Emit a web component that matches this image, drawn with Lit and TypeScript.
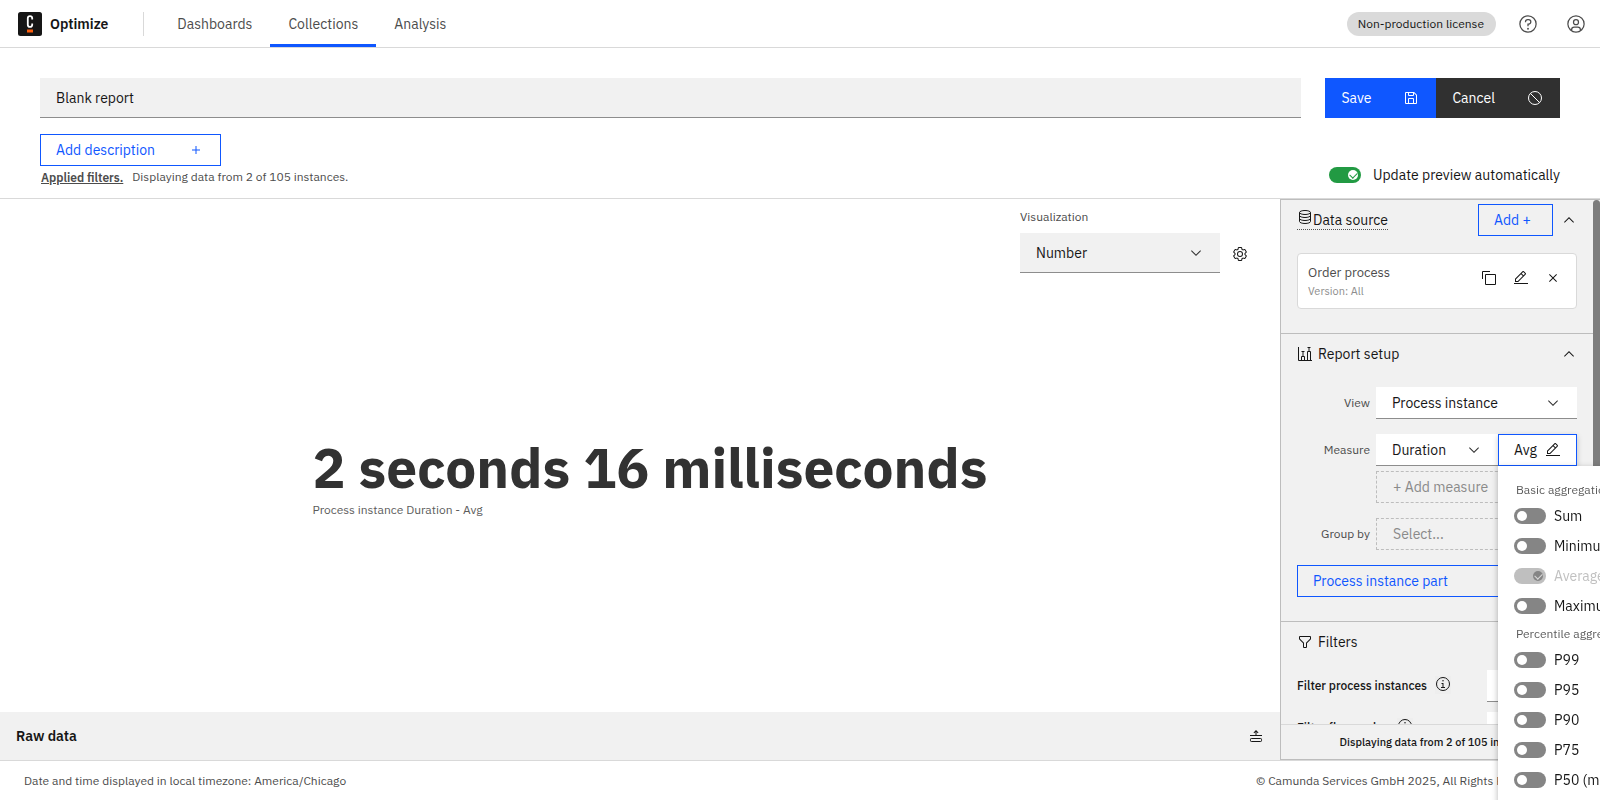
import { LitElement, html, css, svg } from 'lit';
import { customElement, property } from 'lit/decorators.js';

/* Icons are drawn on a 32-unit grid unless a box of 16 is given. */
const ICONS: Record<string, { box?: number; body: unknown }> = {
  help: {
    body: svg`<circle cx="16" cy="16" r="13" fill="none" stroke="currentColor" stroke-width="2"/>
      <circle cx="16" cy="23.5" r="1.5"/>
      <path d="M17 8h-1.5A4.49 4.49 0 0 0 11 12.5v.5h2v-.5A2.5 2.5 0 0 1 15.5 10H17a2.5 2.5 0 0 1 0 5h-2v4.5h2V17a4.5 4.5 0 0 0 0-9Z"/>`,
  },
  user: {
    body: svg`<path d="M16 8a5 5 0 1 0 5 5A5 5 0 0 0 16 8Zm0 8a3 3 0 1 1 3-3A3 3 0 0 1 16 16Z"/>
      <path d="M16 2A14 14 0 1 0 30 16 14 14 0 0 0 16 2ZM10 26.38V25a3 3 0 0 1 3-3h6a3 3 0 0 1 3 3v1.38a11.9 11.9 0 0 1-12 0Zm13.99-1.45A5 5 0 0 0 19 20H13a5 5 0 0 0-4.99 4.93 12 12 0 1 1 15.98 0Z"/>`,
  },
  save: {
    body: svg`<path d="M27.71,9.29l-5-5A1,1,0,0,0,22,4H6A2,2,0,0,0,4,6V26a2,2,0,0,0,2,2H26a2,2,0,0,0,2-2V10A1,1,0,0,0,27.71,9.29ZM12,6h8v4H12Zm8,20H12V18h8Zm2,0V18a2,2,0,0,0-2-2H12a2,2,0,0,0-2,2v8H6V6h4v4a2,2,0,0,0,2,2h8a2,2,0,0,0,2-2V6.41l4,4V26Z"/>`,
  },
  cancel: {
    body: svg`<g fill="none" stroke="currentColor" stroke-width="2"><circle cx="16" cy="16" r="13"/><path d="M6.8 6.8 25.2 25.2"/></g>`,
  },
  add: { body: svg`<path d="M17 15V8H15V15H8V17H15V24H17V17H24V15Z"/>` },
  copy: {
    body: svg`<path d="M28,10V28H10V10H28m0-2H10a2,2,0,0,0-2,2V28a2,2,0,0,0,2,2H28a2,2,0,0,0,2-2V10a2,2,0,0,0-2-2Z"/><path d="M4,18H2V4A2,2,0,0,1,4,2H18V4H4Z"/>`,
  },
  edit: {
    body: svg`<path d="M2 26H30V28H2z"/><path d="M25.4,9c0.8-0.8,0.8-2,0-2.8l-3.6-3.6c-0.8-0.8-2-0.8-2.8,0l-15,15V24h6.4L25.4,9z M20.4,4L24,7.6l-3,3L17.4,7L20.4,4z M6,22v-3.6l10-10l3.6,3.6l-10,10H6z"/>`,
  },
  close: {
    body: svg`<path d="M17.41 16L24 9.41 22.59 8 16 14.59 9.41 8 8 9.41 14.59 16 8 22.59 9.41 24 16 17.41 22.59 24 24 22.59 17.41 16z"/>`,
  },
  down: { box: 16, body: svg`<path d="M8 11L3 6 3.7 5.3 8 9.6 12.3 5.3 13 6z"/>` },
  up: { box: 16, body: svg`<path d="M8 5L13 10 12.3 10.7 8 6.4 3.7 10.7 3 10z"/>` },
  settings: {
    body: svg`<path d="M27,16.76c0-.25,0-.5,0-.76s0-.51,0-.77l1.92-1.68A2,2,0,0,0,29.3,11L26.94,7a2,2,0,0,0-1.73-1,2,2,0,0,0-.64.1l-2.43.82a11.35,11.35,0,0,0-1.31-.75l-.51-2.52a2,2,0,0,0-2-1.61H13.64a2,2,0,0,0-2,1.61l-.51,2.52a11.48,11.48,0,0,0-1.32.75L7.43,6.06A2,2,0,0,0,6.79,6,2,2,0,0,0,5.06,7L2.7,11a2,2,0,0,0,.41,2.51L5,15.24c0,.25,0,.5,0,.76s0,.51,0,.77L3.11,18.45A2,2,0,0,0,2.7,21L5.06,25a2,2,0,0,0,1.73,1,2,2,0,0,0,.64-.1l2.43-.82a11.35,11.35,0,0,0,1.31.75l.51,2.52a2,2,0,0,0,2,1.61h4.72a2,2,0,0,0,2-1.61l.51-2.52a11.48,11.48,0,0,0,1.32-.75l2.42.82a2,2,0,0,0,.64.1,2,2,0,0,0,1.73-1L29.3,21a2,2,0,0,0-.41-2.51ZM25.21,24l-3.43-1.16a8.86,8.86,0,0,1-2.71,1.57L18.36,28H13.64l-.71-3.55a9.36,9.36,0,0,1-2.7-1.57L6.79,24,4.43,20l2.72-2.4a8.9,8.9,0,0,1,0-3.13L4.43,12,6.79,8l3.43,1.16a8.86,8.86,0,0,1,2.71-1.57L13.64,4h4.72l.71,3.55a9.36,9.36,0,0,1,2.7,1.57L25.21,8,27.57,12l-2.72,2.4a8.9,8.9,0,0,1,0,3.13L27.57,20Z"/><path d="M16,22a6,6,0,1,1,6-6A5.94,5.94,0,0,1,16,22Zm0-10a3.91,3.91,0,0,0-4,4,3.91,3.91,0,0,0,4,4,3.91,3.91,0,0,0,4-4A3.91,3.91,0,0,0,16,12Z"/>`,
  },
  filter: {
    body: svg`<path d="M18,28H14a2,2,0,0,1-2-2V18.41L4.59,11A2,2,0,0,1,4,9.59V6A2,2,0,0,1,6,4H26a2,2,0,0,1,2,2V9.59A2,2,0,0,1,27.41,11L20,18.41V26A2,2,0,0,1,18,28ZM6,6V9.59l8,8V26h4V17.59l8-8V6Z"/>`,
  },
  database: {
    box: 16,
    body: svg`<g fill="none" stroke="currentColor"><ellipse cx="8" cy="3.5" rx="5.5" ry="2"/><path d="M2.5 3.5v9M13.5 3.5v9M2.5 6.5c0 1.1 2.5 2 5.5 2s5.5-.9 5.5-2M2.5 9.5c0 1.1 2.5 2 5.5 2s5.5-.9 5.5-2M2.5 12.5c0 1.1 2.5 2 5.5 2s5.5-.9 5.5-2"/></g>`,
  },
  chart: {
    box: 16,
    body: svg`<g fill="none" stroke="currentColor"><path d="M1.5 1V14.5H15"/><path d="M4.5 14V10.5H7.5V14M10.5 14V5.5H13.5V14"/><path d="M6 10V5.5M4.5 5.5H7.5M12 5V1.5M10.5 1.5H13.5"/></g>`,
  },
  info: {
    body: svg`<circle cx="16" cy="16" r="13" fill="none" stroke="currentColor" stroke-width="2"/><path d="M17 22V14H13V16H15V22H12V24H20V22Z"/><circle cx="16" cy="9.5" r="1.5"/>`,
  },
  expand: {
    box: 16,
    body: svg`<path d="M2 7H14V8H2Z"/><path d="M8 2 10.5 4.5 9.8 5.2 8.5 3.9V7h-1V3.9L6.2 5.2 5.5 4.5Z"/><rect x="2.5" y="10.5" width="11" height="3" rx=".8" fill="none" stroke="currentColor"/>`,
  },
};

@customElement('ui-icon')
class UiIcon extends LitElement {
  @property() name = '';
  static styles = css`
    :host { display: inline-flex; width: 16px; height: 16px; flex: none; pointer-events: none; }
    svg { width: 100%; height: 100%; fill: currentColor; }
  `;
  render() {
    const icon = ICONS[this.name];
    const box = icon?.box ?? 32;
    return html`<svg viewBox="0 0 ${box} ${box}" aria-hidden="true">${icon?.body}</svg>`;
  }
}

const BASIC = [
  { name: 'Sum' },
  { name: 'Minimum' },
  { name: 'Average', on: true },
  { name: 'Maximum' },
];
const PERCENTILES = [
  { name: 'P99' }, { name: 'P95' }, { name: 'P90' }, { name: 'P75' }, { name: 'P50 (median)' },
];

@customElement('app-root')
class AppRoot extends LitElement {
  static styles = css`
    :host {
      --blue: #0f57ff;
      --text: #161616;
      --muted: #4c4c4c;
      --layer: #f1f1f1;
      --line: #d9d9d9;
      --line-strong: #bdbdbd;
      display: flex;
      flex-direction: column;
      height: 100vh;
      overflow: hidden;
      background: #fff;
      color: var(--text);
      font: 400 14px/18px "IBM Plex Sans", Roboto, sans-serif;
    }
    * { box-sizing: border-box; }
    button, input, select { font: inherit; color: inherit; margin: 0; border-radius: 0; }
    button { border: 0; background: none; padding: 0; cursor: pointer; }
    a { color: inherit; text-decoration: none; }
    h1, h2, p { margin: 0; font: inherit; }

    /* top bar */
    .topbar { display: flex; align-items: center; height: 48px; flex: none; border-bottom: 1px solid var(--line); padding-left: 18px; }
    .brand { display: flex; align-items: center; gap: 8px; font-weight: 600; }
    .logo { width: 24px; height: 24px; }
    .divider { width: 1px; height: 24px; background: var(--line); margin: 0 15px 0 35px; }
    .nav { display: flex; align-self: stretch; flex: 1; color: var(--muted); }
    .nav a { display: flex; align-items: center; padding: 3px 18px 0; border-bottom: 3px solid transparent; }
    .nav a.active { border-color: var(--blue); }
    .license { height: 24px; padding: 3px 12px 0 11px; border-radius: 12px; background: #dadada; font-size: 12px; margin-right: 8px; }
    .round { width: 48px; height: 47px; display: grid; place-items: center; color: var(--muted); }
    .round ui-icon { width: 20px; height: 20px; }

    /* report head */
    .head { display: flex; flex-direction: column; gap: 16px; padding: 30px 40px 12px; border-bottom: 1px solid var(--line); flex: none; }
    .head-row { display: flex; justify-content: space-between; align-items: end; gap: 24px; }
    .name { flex: 1; min-width: 0; height: 40px; border: 0; border-bottom: 1px solid #8d8d8d; background: var(--layer); padding: 0 16px; outline: 0; }
    .actions { display: flex; color: #fff; }
    .action { height: 40px; display: flex; align-items: center; gap: 32px; padding: 0 17px 0 16px; }
    .action.primary { background: var(--blue); }
    .action.dark { background: #303030; }
    .outlined { height: 32px; display: inline-flex; align-items: center; border: 1px solid var(--blue); color: var(--blue); padding: 0 16px 0 15px; }
    .describe { gap: 33px; }
    .source-add { min-width: 75px; }
    .filters-info { display: flex; align-items: end; gap: 9px; padding: 2px 0 0 1px; font-size: 12px; color: var(--muted); }
    .applied { font-weight: 600; line-height: 16px; text-decoration: underline; }
    .switch { display: flex; align-items: center; gap: 12px; padding-bottom: 2px; }

    /* toggles */
    .toggle { appearance: none; width: 32px; height: 16px; flex: none; border-radius: 8px; background: #858585; position: relative; }
    .toggle::before { content: ""; position: absolute; left: 3px; top: 3px; width: 10px; height: 10px; border-radius: 50%; background: #fff; }
    .toggle:checked { background: #229a43; }
    .toggle:checked::before { left: 19px; }
    .toggle:checked::after { content: ""; position: absolute; left: 21px; top: 5px; width: 6px; height: 4px; border: solid #229a43; border-width: 0 0 1px 1px; transform: rotate(-45deg); }
    .toggle:disabled { background: #bfbfbf; }
    .toggle:disabled::before { background: #858585; }
    .toggle:disabled::after { border-color: #dadada; }

    /* select boxes */
    .select { display: grid; align-items: center; }
    .select > * { grid-area: 1 / 1; }
    .select ui-icon { justify-self: end; margin-right: 16px; color: #323232; z-index: 1; }
    .select select { appearance: none; width: 100%; height: 32px; border: 0; border-bottom: 1px solid #8d8d8d; background: #fff; padding: 0 32px 0 16px; outline: 0; }

    /* work area */
    .work { flex: 1; min-height: 0; display: grid; grid-template-columns: minmax(0, 1fr) 320px; }
    .stage { display: flex; flex-direction: column; min-height: 0; }
    .visual { display: flex; justify-content: flex-end; align-items: end; gap: 4px; padding: 9px 24px 0 0; }
    .visual-field { display: grid; gap: 7px; width: 200px; }
    .visual-field label { font-size: 12px; color: var(--muted); }
    .visual-field .select select { height: 40px; background: var(--layer); }
    .gear { width: 32px; height: 38px; display: grid; place-items: center; }
    .result { flex: 1; min-height: 0; display: grid; place-content: center; padding: 0 0 32px 20px; }
    .value { font-size: 55px; line-height: 66px; font-weight: 700; color: #323232; white-space: nowrap; }
    .caption { font-size: 12px; color: #5c5c5c; }
    .raw { display: flex; align-items: center; justify-content: space-between; height: 48px; flex: none; background: var(--layer); padding: 0 16px; font-weight: 600; }
    .raw button { display: grid; }

    /* side panel */
    .panel { display: flex; flex-direction: column; min-height: 0; border: 1px solid var(--line-strong); border-right: 0; background: var(--layer); }
    .panel-body { flex: 1; min-height: 0; display: flex; overflow: hidden; }
    .sections { flex: 1; min-width: 0; }
    .scrollbar { width: 7px; border-radius: 4px 4px 0 0; background: #7d7d7d; }
    .section { padding: 4px 16px 24px; border-bottom: 1px solid var(--line-strong); }
    .section-head { display: flex; align-items: center; height: 32px; margin-bottom: 17px; }
    .section.compact .section-head { margin-bottom: 12px; }
    .section-title { display: flex; align-items: center; gap: 5px; margin-right: auto; }
    .source-title { gap: 0; border-bottom: 1px dotted #525252; height: 20px; }
    .source-title ui-icon { margin-bottom: 6px; }
    .collapse { width: 16px; height: 16px; margin-left: 8px; display: grid; }
    .card { display: flex; align-items: center; height: 56px; background: #fff; border: 1px solid var(--line); border-radius: 4px; padding: 0 7px 0 10px; }
    .card-text { flex: 1; display: grid; gap: 1px; }
    .card-name { font-size: 13px; color: var(--muted); }
    .card-version { font-size: 11px; line-height: 16px; color: #8d8d8d; }
    .card button { width: 32px; height: 32px; display: grid; place-items: center; margin-bottom: 6px; }
    .form { display: grid; grid-template-columns: 73px minmax(0, 1fr); column-gap: 6px; row-gap: 15px; align-items: center; margin-bottom: 15px; }
    .form > label { font-size: 12px; color: var(--muted); text-align: right; }
    .stack { grid-column: 2; margin-top: -10px; }
    .measure { display: grid; grid-template-columns: minmax(0, 1fr) 79px; }
    .avg { width: 100%; height: 32px; display: flex; align-items: center; justify-content: space-between; padding: 0 15px; background: #fff; border: 1px solid var(--blue); box-shadow: 0 2px 6px rgb(0 0 0 / 20%); }
    .dashed { width: 100%; height: 32px; border: 1px dashed var(--line-strong); color: #8a8a8a; text-align: left; padding: 0 16px; }
    .select select.ghost { border: 1px dashed var(--line-strong); background: none; color: #8a8a8a; opacity: 1; }
    .part { width: 100%; justify-content: space-between; }
    .filter-row { display: flex; align-items: center; margin-bottom: 10px; font-size: 12px; font-weight: 500; }
    .filter-row > span { flex: 1; display: flex; align-items: center; gap: 8px; }
    .hint { width: 16px; height: 18px; display: grid; background: #eee; margin-bottom: 2px; }
    .filter-add { height: 32px; width: 90px; background: #fff; border-bottom: 1px solid #8d8d8d; font-size: 14px; }
    .panel-foot { height: 35px; flex: none; border-top: 1px solid var(--line); display: grid; place-items: center; font-size: 11px; font-weight: 500; }

    /* aggregation menu: fixed without offsets keeps it under its button and free of the panel's clipping */
    .menu { position: fixed; z-index: 5; width: 240px; padding: 11px 16px 16px; background: #fff; box-shadow: 0 2px 6px rgb(0 0 0 / 30%); }
    .menu fieldset { border: 0; margin: 0; padding: 0; min-width: 0; }
    .menu legend { padding: 5px 2px 3px; font-size: 12px; line-height: 16px; color: #5c5c5c; }
    .option { display: flex; align-items: center; gap: 8px; height: 30px; white-space: nowrap; }
    .option.off { color: #c1c1c1; }

    .foot { display: flex; justify-content: space-between; align-items: center; height: 40px; flex: none; border-top: 1px solid var(--line); padding: 0 24px; font-size: 12px; color: var(--muted); white-space: nowrap; }
    .legal { width: 320px; }
  `;

  private options(items: { name: string; on?: boolean }[]) {
    return items.map(
      (o) => html`<label class="option ${o.on ? 'off' : ''}">
        <input class="toggle" type="checkbox" role="switch" ?checked=${o.on} ?disabled=${o.on} />${o.name}
      </label>`,
    );
  }

  private sectionHead(icon: string, title: string) {
    return html`<div class="section-head">
      <h2 class="section-title"><ui-icon name=${icon}></ui-icon>${title}</h2>
      <button class="collapse" aria-label="Collapse ${title}"><ui-icon name="up"></ui-icon></button>
    </div>`;
  }

  private filterRow(title: string) {
    return html`<div class="filter-row">
      <span>${title}<button class="hint" aria-label="About: ${title}"><ui-icon name="info"></ui-icon></button></span>
      <button class="filter-add">Add +</button>
    </div>`;
  }

  render() {
    return html`
      <header class="topbar">
        <a class="brand" href="#home">
          <svg class="logo" viewBox="0 0 24 24" aria-hidden="true">
            <rect width="24" height="24" rx="2.5" fill="#161616" />
            <path d="M14.2 7.4V6.3A2.2 2.2 0 0 0 9.8 6.3V12.7A2.2 2.2 0 0 0 14.2 12.7V11.6" fill="none" stroke="#fff" stroke-width="1.8" />
            <rect x="9" y="17.5" width="6" height="3" fill="#fc5d0d" />
          </svg>
          Optimize
        </a>
        <span class="divider"></span>
        <nav class="nav">
          <a href="#dashboards">Dashboards</a>
          <a href="#collections" class="active" aria-current="page">Collections</a>
          <a href="#analysis">Analysis</a>
        </nav>
        <span class="license">Non-production license</span>
        <button class="round" aria-label="Help"><ui-icon name="help"></ui-icon></button>
        <button class="round" aria-label="Account"><ui-icon name="user"></ui-icon></button>
      </header>

      <section class="head">
        <div class="head-row">
          <input class="name" aria-label="Report name" value="Blank report" />
          <div class="actions">
            <button class="action primary">Save<ui-icon name="save"></ui-icon></button>
            <button class="action dark">Cancel<ui-icon name="cancel"></ui-icon></button>
          </div>
        </div>
        <div class="head-row">
          <div>
            <button class="outlined describe">Add description<ui-icon name="add"></ui-icon></button>
            <p class="filters-info"><button class="applied">Applied filters.</button>Displaying data from 2 of 105 instances.</p>
          </div>
          <label class="switch"><input class="toggle" type="checkbox" role="switch" checked />Update preview automatically</label>
        </div>
      </section>

      <main class="work">
        <section class="stage">
          <div class="visual">
            <div class="visual-field">
              <label for="visualization">Visualization</label>
              <div class="select">
                <select id="visualization"><option>Number</option></select>
                <ui-icon name="down"></ui-icon>
              </div>
            </div>
            <button class="gear" aria-label="Configure visualization"><ui-icon name="settings"></ui-icon></button>
          </div>
          <div class="result">
            <div class="value">2 seconds 16 milliseconds</div>
            <div class="caption">Process instance Duration - Avg</div>
          </div>
          <div class="raw">Raw data<button aria-label="Expand raw data"><ui-icon name="expand"></ui-icon></button></div>
        </section>

        <aside class="panel">
          <div class="panel-body">
            <div class="sections">
              <section class="section">
                <div class="section-head">
                  <h2 class="section-title source-title"><ui-icon name="database"></ui-icon>Data source</h2>
                  <button class="outlined source-add">Add +</button>
                  <button class="collapse" aria-label="Collapse Data source"><ui-icon name="up"></ui-icon></button>
                </div>
                <div class="card">
                  <div class="card-text">
                    <span class="card-name">Order process</span>
                    <span class="card-version">Version: All</span>
                  </div>
                  <button aria-label="Copy"><ui-icon name="copy"></ui-icon></button>
                  <button aria-label="Edit"><ui-icon name="edit"></ui-icon></button>
                  <button aria-label="Remove"><ui-icon name="close"></ui-icon></button>
                </div>
              </section>

              <section class="section">
                ${this.sectionHead('chart', 'Report setup')}
                <div class="form">
                  <label for="view">View</label>
                  <div class="select">
                    <select id="view"><option>Process instance</option></select>
                    <ui-icon name="down"></ui-icon>
                  </div>
                  <label for="measure">Measure</label>
                  <div class="measure">
                    <div class="select">
                      <select id="measure"><option>Duration</option></select>
                      <ui-icon name="down"></ui-icon>
                    </div>
                    <div>
                      <button class="avg" aria-expanded="true">Avg<ui-icon name="edit"></ui-icon></button>
                      <div class="menu">
                        <fieldset>
                          <legend>Basic aggregations</legend>
                          ${this.options(BASIC)}
                        </fieldset>
                        <fieldset>
                          <legend>Percentile aggregations</legend>
                          ${this.options(PERCENTILES)}
                        </fieldset>
                      </div>
                    </div>
                  </div>
                  <div class="stack"><button class="dashed">+ Add measure</button></div>
                  <label for="group">Group by</label>
                  <div class="select">
                    <select id="group" class="ghost" disabled><option>Select...</option></select>
                  </div>
                </div>
                <button class="outlined part">Process instance part<ui-icon name="add"></ui-icon></button>
              </section>

              <section class="section compact">
                ${this.sectionHead('filter', 'Filters')}
                ${this.filterRow('Filter process instances')}
                ${this.filterRow('Filter flow nodes')}
              </section>
            </div>
            <div class="scrollbar"></div>
          </div>
          <p class="panel-foot">Displaying data from 2 of 105 instances.</p>
        </aside>
      </main>

      <footer class="foot">
        <span>Date and time displayed in local timezone: America/Chicago</span>
        <span class="legal">© Camunda Services GmbH 2025, All Rights Reserved. | 8.8.0</span>
      </footer>
    `;
  }
}
